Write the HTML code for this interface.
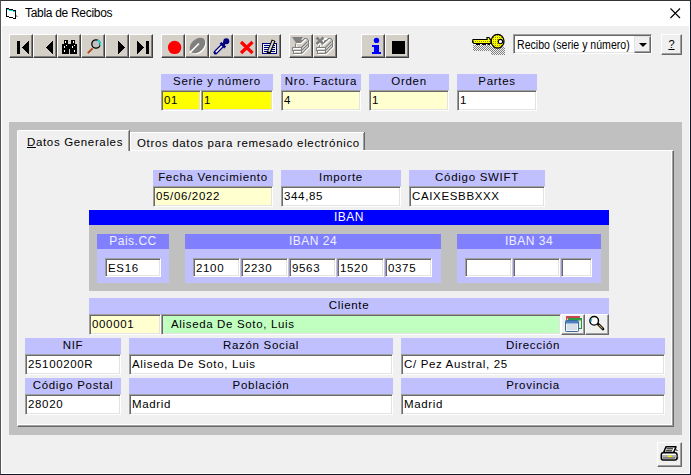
<!DOCTYPE html>
<html><head><meta charset="utf-8">
<style>
*{box-sizing:border-box;margin:0;padding:0}
html,body{width:691px;height:475px;overflow:hidden;background:#F0F0F0;font-family:"Liberation Sans",sans-serif;color:#000}
.a{position:absolute}
#win{position:absolute;left:0;top:0;width:691px;height:475px;background:#F0F0F0;border:1px solid #3c3c3c;border-right-width:2px}
#title{position:absolute;left:0;top:0;width:100%;height:26px;background:#fff}
.tb{position:absolute;top:34px;height:24px;width:24px;background:#D4D0C8;border-top:1px solid #fff;border-left:1px solid #fff;border-right:1px solid #404040;border-bottom:1px solid #404040;box-shadow:inset -1px -1px 0 #808080}
.lbl{position:absolute;background:#C0C0FF;height:16px;font-size:11.5px;letter-spacing:0.7px;text-align:center;line-height:15px;white-space:nowrap}
.inp{position:absolute;height:21px;background:#fff;border-top:1px solid #A0A0A0;border-left:1px solid #A0A0A0;border-bottom:1px solid #fff;border-right:1px solid #fff;box-shadow:inset 1px 1px 0 #696969, inset -1px -1px 0 #E3E3E3;font-size:11.5px;letter-spacing:0.65px;line-height:19px;padding-left:2px;white-space:nowrap;overflow:hidden}
.hdr{position:absolute;background:#8080FF;color:#F0F0FF;height:15px;font-size:12px;letter-spacing:0.5px;text-align:center;line-height:15px}
.box{position:absolute;background:#C0C0FF}
.btn{position:absolute;background:#F0F0F0;border-top:1px solid #fff;border-left:1px solid #fff;border-right:1px solid #696969;border-bottom:1px solid #696969;box-shadow:inset -1px -1px 0 #A0A0A0}
</style></head><body>
<div id="win">
</div>
<div id="title"></div>
<!-- title icon -->
<svg class="a" style="left:0;top:0" width="24" height="24" viewBox="0 0 24 24" shape-rendering="crispEdges">
<g fill="#000">
<rect x="6" y="8" width="3" height="1"/><rect x="9" y="9" width="4" height="1"/><rect x="13" y="10" width="3" height="1"/>
<rect x="6" y="9" width="1" height="8"/><rect x="15" y="11" width="1" height="8"/>
<rect x="6" y="16" width="3" height="1"/><rect x="9" y="17" width="4" height="1"/><rect x="13" y="18" width="3" height="1"/>
</g>
<g fill="#00E0E0"><rect x="7" y="9" width="2" height="1"/><rect x="9" y="10" width="4" height="1"/><rect x="13" y="11" width="2" height="1"/></g>
<g fill="#A0A0A0"><rect x="16" y="16" width="2" height="1"/><rect x="16" y="15" width="1" height="1"/></g>
</svg>
<div class="a" style="left:25px;top:6px;font-size:12px;letter-spacing:-0.3px;color:#000">Tabla de Recibos</div>
<svg class="a" style="left:669px;top:7px" width="12" height="12" viewBox="0 0 12 12"><path d="M1.5 1.5L11 11M11 1.5L1.5 11" stroke="#000" stroke-width="1.1"/></svg>

<!-- toolbar group 1 -->
<div class="tb" style="left:9px"></div>
<div class="tb" style="left:33px"></div>
<div class="tb" style="left:57px"></div>
<div class="tb" style="left:81px"></div>
<div class="tb" style="left:105px"></div>
<div class="tb" style="left:129px"></div>
<!-- group 2 -->
<div class="tb" style="left:161px"></div>
<div class="tb" style="left:185px"></div>
<div class="tb" style="left:209px"></div>
<div class="tb" style="left:233px"></div>
<div class="tb" style="left:257px"></div>
<!-- group 3 -->
<div class="tb" style="left:289px"></div>
<div class="tb" style="left:313px"></div>
<!-- group 4 -->
<div class="tb" style="left:361px"></div>
<div class="tb" style="left:385px"></div>


<!-- toolbar icons overlay -->
<svg class="a" style="left:0;top:0" width="691" height="475" viewBox="0 0 691 475">
<g shape-rendering="crispEdges" fill="#000">
<rect x="17" y="41" width="3" height="13"/>
<polygon points="22,47.5 29,41 29,54"/>
<polygon points="46,47.5 53,41 53,54"/>
<polygon points="118,41 118,54 125,47.5"/>
<polygon points="137,41 137,54 144,47.5"/>
<rect x="146" y="41" width="3" height="13"/>
<rect x="392" y="41" width="13" height="13"/>
</g>
<!-- binoculars -->
<g shape-rendering="crispEdges">
<path fill="#000" d="M64 40H68V44H71V40H75V44H77V54H70V49H69V54H62V44H64Z"/>
<rect x="65" y="41" width="1" height="2" fill="#fff"/><rect x="73" y="41" width="1" height="2" fill="#fff"/>
<rect x="64" y="46" width="1" height="2" fill="#fff"/><rect x="66" y="45" width="1" height="1" fill="#fff"/>
<rect x="72" y="46" width="1" height="2" fill="#fff"/><rect x="74" y="45" width="1" height="1" fill="#fff"/>
<rect x="64" y="50" width="1" height="2" fill="#fff"/><rect x="74" y="50" width="1" height="2" fill="#fff"/>
</g>
<!-- magnifier -->
<line x1="87.8" y1="53.2" x2="92.6" y2="48.4" stroke="#B04010" stroke-width="1.8"/>
<circle cx="96" cy="44" r="4.2" fill="#C0C0C0" stroke="#000" stroke-width="1.3"/>
<path d="M97.5 40.2 A4.2 4.2 0 0 1 100.2 45.5" fill="none" stroke="#00FFFF" stroke-width="1.3"/>
<!-- red circle -->
<circle cx="174.6" cy="47.4" r="6.7" fill="#FF0000"/>
<!-- leaf disabled -->
<g transform="translate(1,1)" fill="#fff"><ellipse cx="197.5" cy="45.5" rx="9.2" ry="6.2" transform="rotate(-45 197.5 45.5)"/></g>
<ellipse cx="197.5" cy="45.5" rx="9.2" ry="6.2" transform="rotate(-45 197.5 45.5)" fill="#808080"/>
<line x1="189.8" y1="52.8" x2="199" y2="43.5" stroke="#fff" stroke-width="1.6"/>
<!-- dropper -->
<line x1="215.5" y1="52.5" x2="222.5" y2="45.5" stroke="#000080" stroke-width="4" stroke-linecap="round"/>
<line x1="215.8" y1="52.2" x2="222.5" y2="45.5" stroke="#fff" stroke-width="1.6"/>
<line x1="220.5" y1="42.8" x2="225.2" y2="47.5" stroke="#000080" stroke-width="2.6"/>
<line x1="222.5" y1="45" x2="225.5" y2="42" stroke="#000080" stroke-width="3"/>
<circle cx="226.3" cy="41.3" r="3" fill="#000080"/>
<!-- red X -->
<path d="M241 42 L252.5 53 M252.5 42 L241 53" stroke="#FF0000" stroke-width="3.2"/>
<!-- edit icon -->
<g shape-rendering="crispEdges">
<rect x="262" y="43" width="15" height="11" fill="#000080"/>
<rect x="263" y="44" width="13" height="9" fill="#F0F0E8"/>
<rect x="264" y="45" width="11" height="1" fill="#000080"/>
<rect x="264" y="47" width="11" height="1" fill="#000080"/>
<rect x="264" y="49" width="11" height="1" fill="#000080"/>
<rect x="264" y="51" width="11" height="1" fill="#000080"/>
</g>
<line x1="268.4" y1="53.6" x2="273.6" y2="40.2" stroke="#000" stroke-width="4"/>
<line x1="268.9" y1="51.6" x2="273.3" y2="41" stroke="#E0E0D8" stroke-width="1.9"/>
<!-- disabled printers -->
<g transform="translate(0,0)"><g transform="translate(1,1)" stroke="#fff"><path d="M295.5 43.5 V47.5 M292.5 47.5 H301.5 V53.5 H293.5 V50.5 H301.5 M292.5 47.5 V50.5 H293.5 M301.5 53.5 L308.5 46.5 V40.5 L306.5 38.5 H304.5 L302.5 40.5 H300.5 V42.5 H297.5 M301.5 47.5 L307.5 41.5 M301.5 50.5 L308.5 43.5 M300.5 42.5 L303.5 39.5" fill="none" stroke-width="1.1"/></g><polygon points="293,38 304,38 300.5,44 297,44" fill="#fff"/><g transform="translate(0,0)" stroke="#808080"><path d="M295.5 43.5 V47.5 M292.5 47.5 H301.5 V53.5 H293.5 V50.5 H301.5 M292.5 47.5 V50.5 H293.5 M301.5 53.5 L308.5 46.5 V40.5 L306.5 38.5 H304.5 L302.5 40.5 H300.5 V42.5 H297.5 M301.5 47.5 L307.5 41.5 M301.5 50.5 L308.5 43.5 M300.5 42.5 L303.5 39.5" fill="none" stroke-width="1.1"/></g><polygon points="292,37 303,37 299.5,43 296,43" fill="#808080"/></g>
<g transform="translate(24,0)"><g transform="translate(1,1)" stroke="#fff"><path d="M295.5 43.5 V47.5 M292.5 47.5 H301.5 V53.5 H293.5 V50.5 H301.5 M292.5 47.5 V50.5 H293.5 M301.5 53.5 L308.5 46.5 V40.5 L306.5 38.5 H304.5 L302.5 40.5 H300.5 V42.5 H297.5 M301.5 47.5 L307.5 41.5 M301.5 50.5 L308.5 43.5 M300.5 42.5 L303.5 39.5" fill="none" stroke-width="1.1"/></g><polygon points="293,38 304,38 300.5,44 297,44" fill="#fff"/><g transform="translate(0,0)" stroke="#808080"><path d="M295.5 43.5 V47.5 M292.5 47.5 H301.5 V53.5 H293.5 V50.5 H301.5 M292.5 47.5 V50.5 H293.5 M301.5 53.5 L308.5 46.5 V40.5 L306.5 38.5 H304.5 L302.5 40.5 H300.5 V42.5 H297.5 M301.5 47.5 L307.5 41.5 M301.5 50.5 L308.5 43.5 M300.5 42.5 L303.5 39.5" fill="none" stroke-width="1.1"/></g></g>
<path d="M317.5 38.5 L324.5 45 M324.5 38.5 L317.5 45" stroke="#fff" stroke-width="2.8"/><path d="M316.5 37.5 L323.5 44 M323.5 37.5 L316.5 44" stroke="#808080" stroke-width="2.8"/>
<rect x="318" y="44" width="1" height="1" fill="#fff"/>
<!-- info -->
<g fill="#0000FF">
<circle cx="376.5" cy="40.4" r="2.7"/>
<path d="M372 44.5 h7 v7 h2 v2.5 h-9 v-2.5 h2 v-4.5 h-2 z" shape-rendering="crispEdges"/>
</g>
</svg>

<!-- key -->
<svg class="a" style="left:0;top:0" width="691" height="475" viewBox="0 0 691 475">
<defs>
<pattern id="dith" x="0" y="0" width="2" height="2" patternUnits="userSpaceOnUse"><rect x="0" y="0" width="1" height="1" fill="#808080"/><rect x="1" y="1" width="1" height="1" fill="#808080"/></pattern>
<pattern id="ydith" x="0" y="0" width="2" height="2" patternUnits="userSpaceOnUse"><rect width="2" height="2" fill="#FFFF00"/><rect x="1" y="1" width="1" height="1" fill="#909000"/></pattern>
</defs>
<g shape-rendering="crispEdges">
<rect x="473" y="45" width="18" height="6" fill="url(#dith)"/>
<rect x="491" y="47" width="14" height="8" fill="url(#dith)"/>
</g>
<path d="M473 39.5 H487 V37.5 H489 L490.5 39.5 H491 V43.5 H474 L472.5 42 Z" fill="url(#ydith)" stroke="#000" stroke-width="1.2"/>
<path d="M476 44.5 H480 M482 44.5 H486 M487.5 44.5 H490" stroke="#000" stroke-width="1.2"/>
<ellipse cx="497.6" cy="41.2" rx="6.4" ry="6.9" fill="url(#ydith)" stroke="#000" stroke-width="1.3"/>
<circle cx="500.4" cy="41.6" r="2.2" fill="#fff" stroke="#000" stroke-width="1.1"/>
</svg>

<!-- combo -->
<div class="inp" style="left:513px;top:34px;width:139px;height:20px;font-size:12px;letter-spacing:0;padding-left:3px;line-height:21px"><span style="display:inline-block;transform:scaleX(0.88);transform-origin:0 50%">Recibo (serie y número)</span></div>
<div class="btn" style="left:634px;top:36px;width:17px;height:17px;border-top-color:#E3E3E3;border-left-color:#E3E3E3"></div>
<div class="a" style="left:639px;top:43px;width:0;height:0;border-left:4px solid transparent;border-right:4px solid transparent;border-top:4px solid #000"></div>
<!-- ? button -->
<div class="btn" style="left:661px;top:34px;width:21px;height:21px;font-size:11px;text-align:center;line-height:19px;text-decoration:underline">?</div>

<!-- header fields -->
<div class="lbl" style="left:161px;top:74px;width:112px">Serie y número</div>
<div class="inp" style="left:161px;top:90px;width:40px;background:#FFFF00">01</div>
<div class="inp" style="left:201px;top:90px;width:72px;background:#FFFF00">1</div>
<div class="lbl" style="left:281px;top:74px;width:80px">Nro. Factura</div>
<div class="inp" style="left:281px;top:90px;width:80px;background:#FFFFD0">4</div>
<div class="lbl" style="left:369px;top:74px;width:80px">Orden</div>
<div class="inp" style="left:369px;top:90px;width:80px;background:#FFFFD0">1</div>
<div class="lbl" style="left:457px;top:74px;width:80px">Partes</div>
<div class="inp" style="left:457px;top:90px;width:80px">1</div>

<!-- gray frame -->
<div class="a" style="left:9px;top:122px;width:673px;height:313px;background:#C0C0C0"></div>
<!-- pane -->
<div class="btn" style="left:17px;top:150px;width:657px;height:277px;box-shadow:inset -1px -1px 0 #A0A0A0, inset -2px -2px 0 #fff"></div>
<!-- tabs -->
<div class="a" style="left:130px;top:132px;width:234px;height:18px;background:#F0F0F0;border-top:1px solid #fff;border-left:1px solid #fff;box-shadow:1px 0 0 #696969, inset -1px 0 0 #A0A0A0;font-size:11.5px;letter-spacing:0.65px;line-height:20px;padding-left:6px;white-space:nowrap">Otros datos para remesado electrónico</div>
<div class="a" style="left:17px;top:130px;width:112px;height:21px;background:#F0F0F0;border-top:1px solid #fff;border-left:1px solid #fff;border-top-left-radius:2px;box-shadow:1px 0 0 #696969, inset -1px 0 0 #A0A0A0;font-size:11.5px;letter-spacing:0.65px;line-height:22px;padding-left:9px;white-space:nowrap"><u>D</u>atos Generales</div>

<!-- row 1 -->
<div class="lbl" style="left:153px;top:170px;width:120px">Fecha Vencimiento</div>
<div class="inp" style="left:153px;top:186px;width:120px;background:#FFFFD0">05/06/2022</div>
<div class="lbl" style="left:281px;top:170px;width:120px">Importe</div>
<div class="inp" style="left:281px;top:186px;width:120px">344,85</div>
<div class="lbl" style="left:409px;top:170px;width:136px">Código SWIFT</div>
<div class="inp" style="left:409px;top:186px;width:136px">CAIXESBBXXX</div>

<!-- IBAN -->
<div class="a" style="left:89px;top:210px;width:520px;height:15px;background:#0000FF;color:#fff;font-size:12px;text-align:center;line-height:15px;letter-spacing:0.5px">IBAN</div>
<div class="a" style="left:89px;top:225px;width:520px;height:66px;background:#C0C0C0"></div>
<div class="box" style="left:97px;top:249px;width:72px;height:34px"></div>
<div class="hdr" style="left:97px;top:234px;width:72px">Pais.CC</div>
<div class="inp" style="left:105px;top:258px;width:56px;height:19px;line-height:18px">ES16</div>
<div class="box" style="left:185px;top:249px;width:256px;height:34px"></div>
<div class="hdr" style="left:185px;top:234px;width:256px">IBAN 24</div>
<div class="inp" style="left:193px;top:258px;width:47px;height:19px;line-height:18px">2100</div>
<div class="inp" style="left:241px;top:258px;width:47px;height:19px;line-height:18px">2230</div>
<div class="inp" style="left:289px;top:258px;width:47px;height:19px;line-height:18px">9563</div>
<div class="inp" style="left:337px;top:258px;width:47px;height:19px;line-height:18px">1520</div>
<div class="inp" style="left:385px;top:258px;width:47px;height:19px;line-height:18px">0375</div>
<div class="box" style="left:457px;top:249px;width:144px;height:34px"></div>
<div class="hdr" style="left:457px;top:234px;width:144px">IBAN 34</div>
<div class="inp" style="left:465px;top:258px;width:47px;height:19px;line-height:18px"></div>
<div class="inp" style="left:513px;top:258px;width:47px;height:19px;line-height:18px"></div>
<div class="inp" style="left:561px;top:258px;width:31px;height:19px;line-height:18px"></div>

<!-- Cliente -->
<div class="lbl" style="left:89px;top:298px;width:520px">Cliente</div>
<div class="inp" style="left:89px;top:314px;width:72px;background:#FFFFD0">000001</div>
<div class="inp" style="left:161px;top:314px;width:400px;background:#C0FFC0;padding-left:9px">Aliseda De Soto, Luis</div>
<div class="btn" style="left:561px;top:314px;width:24px;height:21px"></div>
<div class="btn" style="left:585px;top:314px;width:24px;height:21px"></div>

<!-- NIF row -->
<div class="lbl" style="left:25px;top:338px;width:96px">NIF</div>
<div class="inp" style="left:25px;top:354px;width:96px">25100200R</div>
<div class="lbl" style="left:129px;top:338px;width:264px">Razón Social</div>
<div class="inp" style="left:129px;top:354px;width:264px">Aliseda De Soto, Luis</div>
<div class="lbl" style="left:401px;top:338px;width:264px">Dirección</div>
<div class="inp" style="left:401px;top:354px;width:264px">C/ Pez Austral, 25</div>

<div class="lbl" style="left:25px;top:378px;width:96px">Código Postal</div>
<div class="inp" style="left:25px;top:394px;width:96px">28020</div>
<div class="lbl" style="left:129px;top:378px;width:264px">Población</div>
<div class="inp" style="left:129px;top:394px;width:264px">Madrid</div>
<div class="lbl" style="left:401px;top:378px;width:264px">Provincia</div>
<div class="inp" style="left:401px;top:394px;width:264px">Madrid</div>

<!-- print button -->
<div class="btn" style="left:657px;top:442px;width:25px;height:25px"></div>

<!-- cliente btn icons -->
<svg class="a" style="left:0;top:0" width="691" height="475" viewBox="0 0 691 475">
<rect x="566.5" y="316.5" width="13" height="9" fill="#E8D8D8" stroke="#C05060" stroke-width="1"/>
<rect x="566.5" y="316.5" width="13" height="2" fill="#D04050"/>
<rect x="568.5" y="318.5" width="13" height="10" fill="#E0F0E0" stroke="#309040" stroke-width="1"/>
<rect x="568.5" y="318.5" width="13" height="2" fill="#30A040"/>
<rect x="565.5" y="320.5" width="13" height="11" rx="0.8" fill="#F0F4F8" stroke="#3A6A9A" stroke-width="1"/>
<rect x="566" y="321" width="12" height="2.5" fill="#4A80C0"/>
<rect x="567" y="324" width="10" height="6" fill="#D8DEE6"/>
<line x1="598.5" y1="324.5" x2="603" y2="329" stroke="#000" stroke-width="2.6" stroke-linecap="round"/>
<line x1="598.8" y1="324.8" x2="602.6" y2="328.6" stroke="#D8A040" stroke-width="1.1"/>
<circle cx="594.2" cy="320.8" r="4.3" fill="#fff" stroke="#000" stroke-width="1.4"/>
<path d="M592 318.5 a3 3 0 0 0 -0.6 3" stroke="#30C0E0" stroke-width="1.4" fill="none"/>
<!-- printer -->
<path d="M666 446.8 H676 L673.6 452.6 H663.6 Z" fill="#fff" stroke="#000" stroke-width="1.5" stroke-linejoin="round"/>
<path d="M666.5 448.8 H673 M665.8 450.8 H672.2" stroke="#000" stroke-width="1"/>
<path d="M663 452.8 H675 Q677 452.8 677 455 V458 Q677 460 675 460 H663 Q661.3 460 661.3 458 V455 Q661.3 452.8 663 452.8 Z" fill="#fff" stroke="#000" stroke-width="1.5"/>
<rect x="662" y="455" width="14.5" height="2.2" fill="#B0B0B0"/>
<rect x="668" y="455.6" width="3.6" height="1.6" fill="#FFFF00"/>
<path d="M662.5 458 H675.5" stroke="#000" stroke-width="0.9"/>
<path d="M675.5 449 L677.5 451 M676.5 459 L678 457.5" stroke="#000" stroke-width="1"/>
</svg>

<!-- window border -->
<div class="a" style="left:0;top:0;width:691px;height:475px;border-left:1px solid #555;border-top:1px solid #333;border-right:1px solid #14142a;border-bottom:1px solid #14142a"></div>
<div class="a" style="left:1px;top:1px;width:689px;height:473px;border-left:1px solid #fff;border-right:1px solid #fff;border-bottom:1px solid #fff"></div>
</body></html>
